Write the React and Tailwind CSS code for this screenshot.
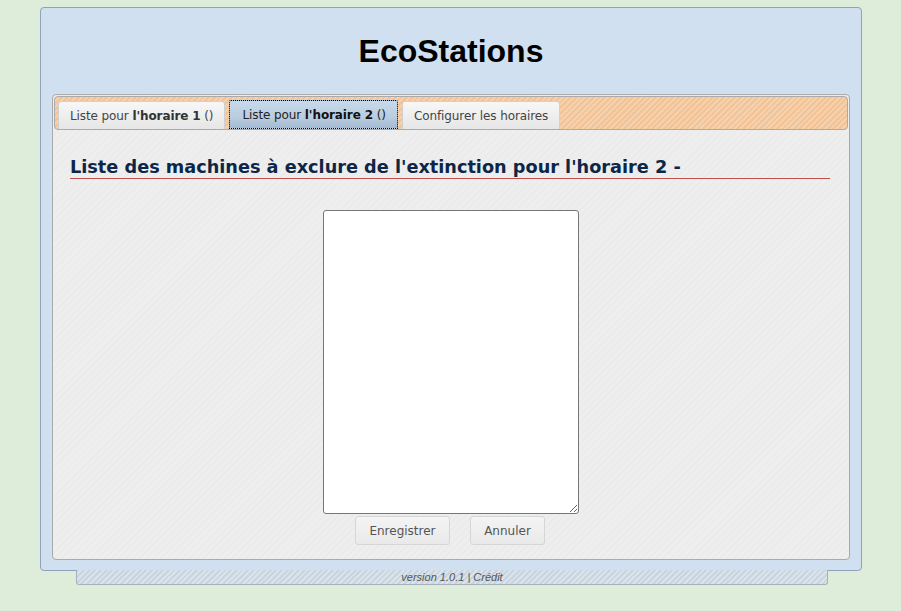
import React from 'react';

const Tab = ({ active, children }) => (
    <div
        className={
            active
                ? 'h-[29px] pl-[12px] pr-[11px] flex items-center border border-dotted border-black rounded-t-[2px] bg-[linear-gradient(#c8d9e9,#b9cde0_60%,#a4bbd2)] text-[#222]'
                : 'h-[28px] pl-[11px] pr-[11px] flex items-center border border-[#d0d0d0] border-b-0 rounded-t-[3px] bg-[linear-gradient(#f7f7f7,#e6e6e6)] text-[#444]'
        }
    >
        {children}
    </div>
);

const App = () => {
    return (
        <div className="min-h-screen bg-[#deedd9] pt-[7px] font-['DejaVu_Sans',sans-serif]">
            <div className="ml-[40px] w-[822px] border border-[#8ea3b9] rounded-[4px] bg-[#d0e0f0] px-[11px] pb-[10px]">
                <div className="h-[86px] flex items-center justify-center">
                    <h1 className="font-['Liberation_Sans',Arial,sans-serif] font-bold text-[32px] text-black mt-[-1px]">EcoStations</h1>
                </div>

                <div className="h-[466px] border border-[#aaaaaa] rounded-[4px] p-[1px] bg-[repeating-linear-gradient(135deg,#eeeeee_0,#eeeeee_3px,#ebebeb_3px,#ebebeb_5px)]">
                    <div className="h-[34px] border border-[#aaaaaa] rounded-[4px] pl-[3px] pt-[4px] flex items-end gap-[4px] text-[12px] tracking-[-0.1px] bg-[repeating-linear-gradient(135deg,#f2c397_0,#f2c397_2px,#f6d1ae_2px,#f6d1ae_4px)]">
                        <Tab>
                            Liste pour&nbsp;<b className="text-[#333]">l'horaire 1</b>&nbsp;()
                        </Tab>
                        <Tab active>
                            Liste pour&nbsp;<b className="text-[#111]">l'horaire 2</b>&nbsp;()
                        </Tab>
                        <Tab>Configurer les horaires</Tab>
                    </div>

                    <div className="pl-[16px] pr-[18px] pt-[27px]">
                        <h2 className="text-[17.7px] font-bold text-[#0d2648] leading-[20px] pb-[1px] border-b border-[#c0504d]">
                            Liste des machines à exclure de l'extinction pour l'horaire 2 -
                        </h2>
                    </div>

                    <div className="flex flex-col items-center mt-[31px]">
                        <textarea className="w-[256px] h-[304px] bg-white border border-[#777777] rounded-[3px] resize-y outline-none" />
                        <div className="flex gap-[20px] mt-[2px] mr-[2px]">
                            <button className="h-[29px] w-[95px] border border-[#d6d6d6] rounded-[3px] bg-[linear-gradient(#f4f4f4,#e9e9e9)] text-[12px] text-[#555]">
                                Enregistrer
                            </button>
                            <button className="h-[29px] w-[75px] border border-[#d6d6d6] rounded-[3px] bg-[linear-gradient(#f4f4f4,#e9e9e9)] text-[12px] text-[#555]">
                                Annuler
                            </button>
                        </div>
                    </div>
                </div>
            </div>

            <div className="ml-[76px] w-[752px] h-[15px] mt-[-1px] border border-t-0 border-[#a7b0ba] rounded-b-[3px] flex items-center justify-center bg-[repeating-linear-gradient(135deg,#c8d4df_0,#c8d4df_2px,#dbe3ea_2px,#dbe3ea_4px)]">
                <span className="font-['Liberation_Sans',Arial,sans-serif] italic text-[11px] text-[#555] leading-none">
                    version 1.0.1 | Crédit
                </span>
            </div>
        </div>
    );
};

export default App;
